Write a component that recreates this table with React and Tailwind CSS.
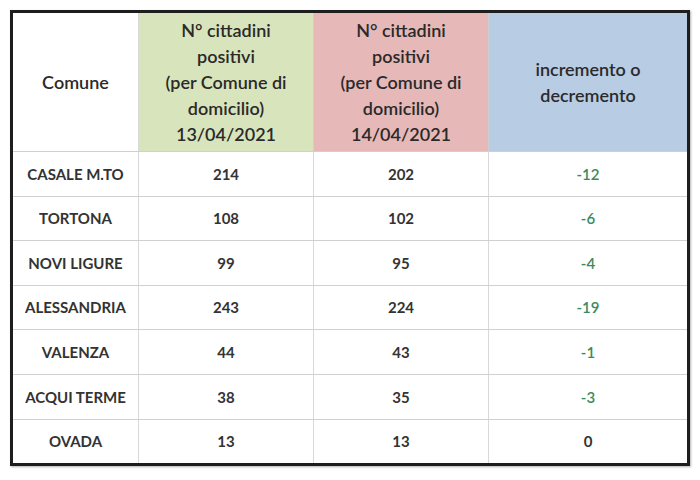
import React from "react";

const rows = [
  ["CASALE M.TO", "214", "202", "-12"],
  ["TORTONA", "108", "102", "-6"],
  ["NOVI LIGURE", "99", "95", "-4"],
  ["ALESSANDRIA", "243", "224", "-19"],
  ["VALENZA", "44", "43", "-1"],
  ["ACQUI TERME", "38", "35", "-3"],
  ["OVADA", "13", "13", "0"],
];

const cols = "grid grid-cols-[126px_175px_175px_1fr]";

const App = () => {
  return (
    <div className="w-[700px] h-[480px] bg-white pt-[10px] pl-[10px] font-['Lato','Open_Sans',sans-serif] text-[#262626]">
      <div className="w-[680px] border-[3px] border-[#1e1e1e] shadow-[1px_1px_2px_rgba(0,0,0,0.3)]">
        <div className={`${cols} h-[138px] text-[18px] font-semibold leading-[26px] text-center text-[#2a2a2a]`}>
          <div className="flex items-center justify-center border-r border-[#d8d8d8]">
            Comune
          </div>
          <div className="flex items-center justify-center bg-[#d8e4bc] border-r border-[#cfcfcf]">
            <span>
              N° cittadini
              <br />
              positivi
              <br />
              (per Comune di
              <br />
              domicilio)
              <br />
              13/04/2021
            </span>
          </div>
          <div className="flex items-center justify-center bg-[#e6b8b7] border-r border-[#cfcfcf]">
            <span>
              N° cittadini
              <br />
              positivi
              <br />
              (per Comune di
              <br />
              domicilio)
              <br />
              14/04/2021
            </span>
          </div>
          <div className="flex items-center justify-center bg-[#b8cce4]">
            <span>
              incremento o
              <br />
              decremento
            </span>
          </div>
        </div>
        {rows.map((r) => (
          <div
            key={r[0]}
            className={`${cols} h-[44.6px] text-[15px] font-bold border-t border-[#d0d0d0]`}
          >
            <div className="flex items-center justify-center border-r border-[#d8d8d8] text-[#333]">
              {r[0]}
            </div>
            <div className="flex items-center justify-center border-r border-[#d8d8d8] text-[#333]">
              {r[1]}
            </div>
            <div className="flex items-center justify-center border-r border-[#d8d8d8] text-[#333]">
              {r[2]}
            </div>
            <div
              className={`flex items-center justify-center ${
                r[3] === "0" ? "text-[#333] font-bold" : "text-[#3b8a5c] font-semibold"
              }`}
            >
              {r[3]}
            </div>
          </div>
        ))}
      </div>
    </div>
  );
};

export default App;
